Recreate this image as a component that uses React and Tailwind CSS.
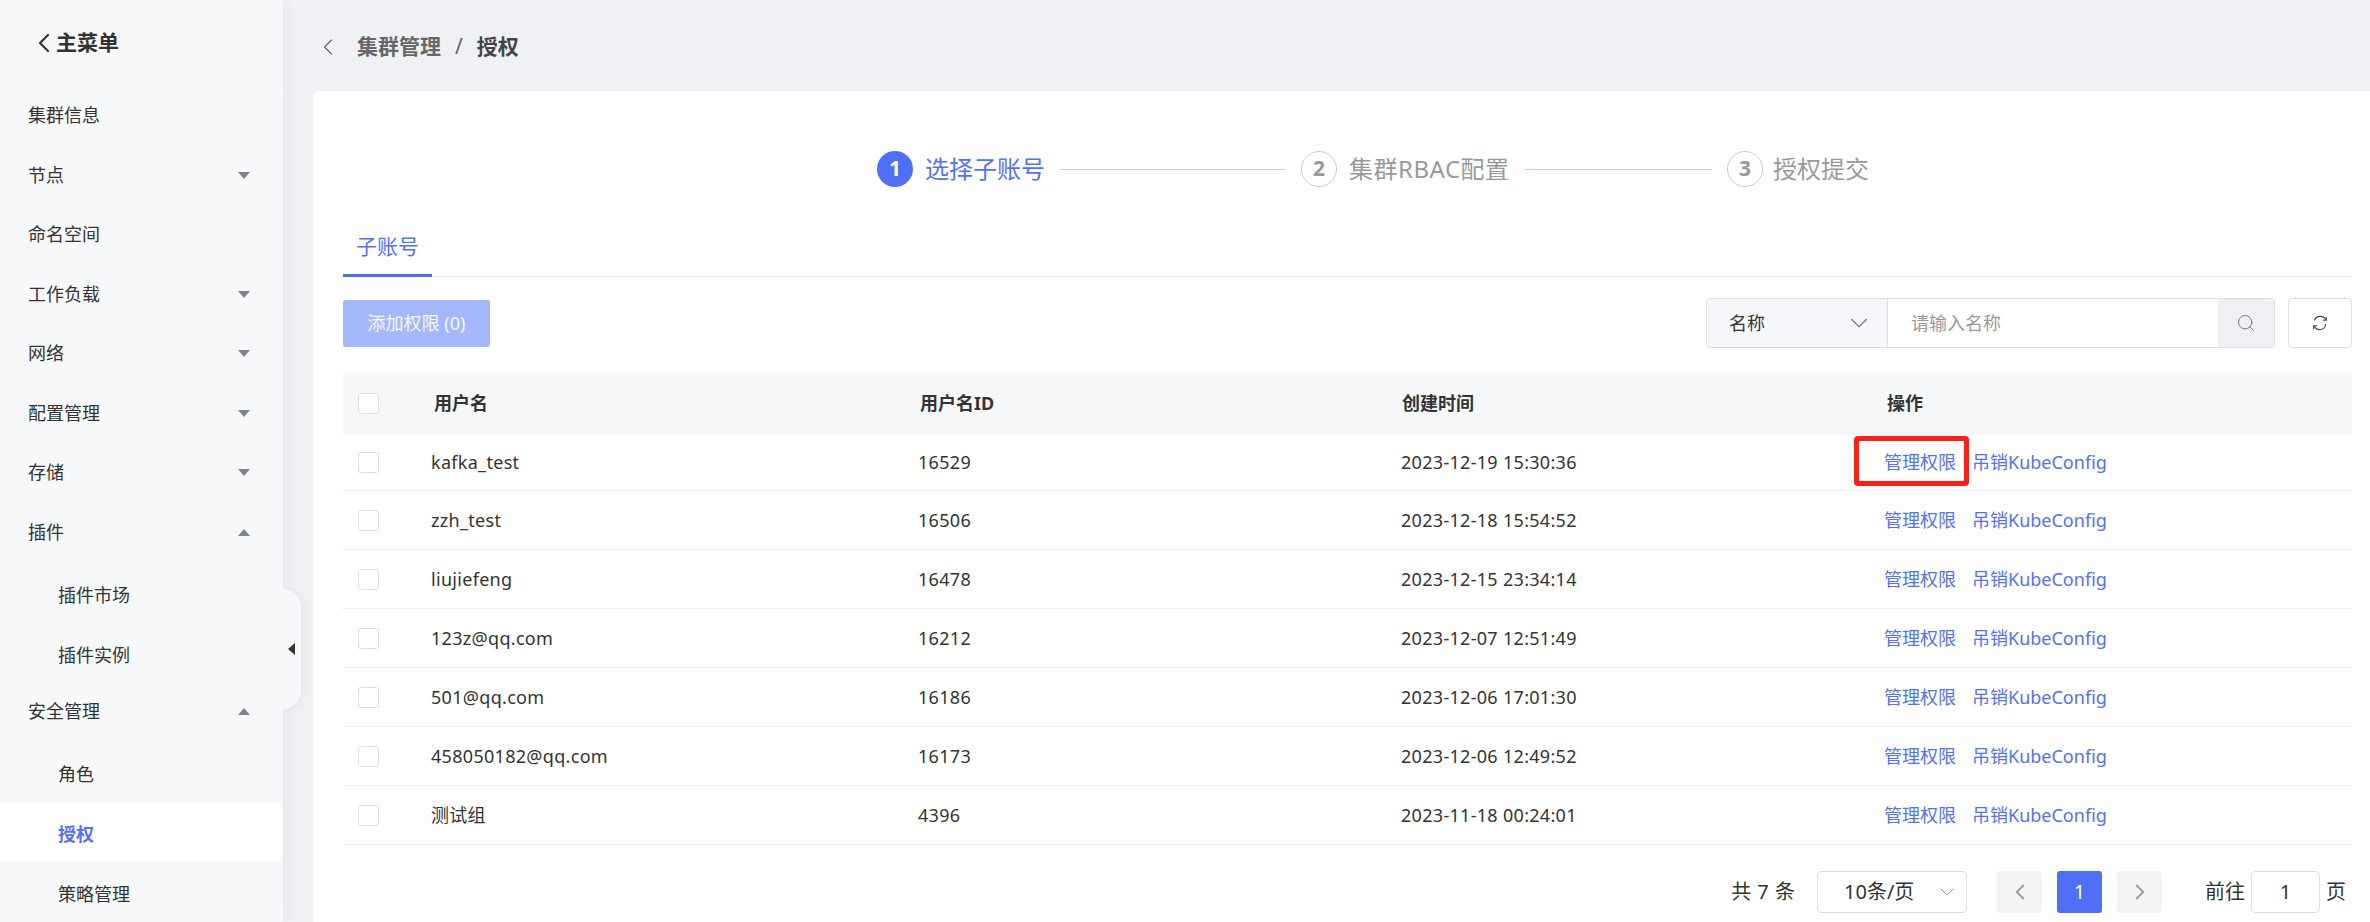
import { ChevronDown, ChevronLeft, ChevronRight, Search } from 'lucide-react'

const menu = [
  { label: '集群信息' },
  { label: '节点', arrow: 'down' },
  { label: '命名空间' },
  { label: '工作负载', arrow: 'down' },
  { label: '网络', arrow: 'down' },
  { label: '配置管理', arrow: 'down' },
  { label: '存储', arrow: 'down' },
  { label: '插件', arrow: 'up' },
  { label: '插件市场', sub: true },
  { label: '插件实例', sub: true },
  { label: '安全管理', arrow: 'up' },
  { label: '角色', sub: true },
  { label: '授权', sub: true, active: true },
  { label: '策略管理', sub: true },
]

const users = [
  { name: 'kafka_test', id: '16529', time: '2023-12-19 15:30:36' },
  { name: 'zzh_test', id: '16506', time: '2023-12-18 15:54:52' },
  { name: 'liujiefeng', id: '16478', time: '2023-12-15 23:34:14' },
  { name: '123z@qq.com', id: '16212', time: '2023-12-07 12:51:49' },
  { name: '501@qq.com', id: '16186', time: '2023-12-06 17:01:30' },
  { name: '458050182@qq.com', id: '16173', time: '2023-12-06 12:49:52' },
  { name: '测试组', id: '4396', time: '2023-11-18 00:24:01' },
]

function Sidebar() {
  return (
    <div className="relative w-[283px] shrink-0 bg-[#f7f8fa] shadow-[4px_0_12px_rgba(40,50,80,0.04)] z-10">
      <div className="flex items-center h-[86px] pl-[28px] text-[21px] font-bold text-[#333]">
        <ChevronLeft size={32} strokeWidth={1.6} className="mr-[-4px]" />
        主菜单
      </div>
      {menu.map(item => (
        <div
          key={item.label}
          className={`flex items-center justify-between pr-[33px] text-[18px] ${item.sub ? 'h-[60px] pl-[58px] pt-[6px]' : 'h-[59.5px] pl-[28px]'} ${item.active ? 'bg-white text-[#5470f6] font-bold' : 'text-[#333]'}`}
        >
          {item.label}
          {item.arrow === 'down' && <div className="w-0 h-0 border-x-[6px] border-x-transparent border-t-[7px] border-t-[#7d8292]" />}
          {item.arrow === 'up' && <div className="w-0 h-0 border-x-[6px] border-x-transparent border-b-[7px] border-b-[#7d8292]" />}
        </div>
      ))}
      <div className="absolute left-full top-[589px] flex items-center w-[18px] h-[120px] pl-[5px] bg-[#f7f8fa] rounded-r-[18px] shadow-[3px_0_6px_rgba(40,50,80,0.04)]">
        <div className="w-0 h-0 border-y-[6px] border-y-transparent border-r-[7px] border-r-[#333]" />
      </div>
    </div>
  )
}

function Step({ num, label, active, width }) {
  return (
    <div className="flex items-center gap-[12px] shrink-0">
      <div className={`flex items-center justify-center w-[36px] h-[36px] rounded-full text-[21px] font-bold ${active ? 'bg-[#4f70f6] text-white' : 'border border-[#c3cbdc] text-[#999]'}`}>
        {num}
      </div>
      <span className={`text-[24px] leading-[36px] whitespace-nowrap ${width} ${active ? 'text-[#5470f6]' : 'text-[#999]'}`}>{label}</span>
    </div>
  )
}

function Checkbox() {
  return <div className="w-[21px] h-[21px] ml-[15px] bg-white border border-[#dcdee2] rounded-[3px]" />
}

function Row({ user }) {
  return (
    <div className="flex items-center h-[59px] first:h-[57px] border-b border-[#eff0f3] text-[18px] text-[#333]">
      <div className="w-[88px]"><Checkbox /></div>
      <div className="w-[487px] tracking-[0.3px]">{user.name}</div>
      <div className="w-[483px] tracking-[0.3px]">{user.id}</div>
      <div className="w-[483px] tracking-[0.3px]">{user.time}</div>
      <div className="flex gap-[16px] text-[#5470f6]">
        <span>管理权限</span>
        <span>吊销KubeConfig</span>
      </div>
    </div>
  )
}

function UserTable() {
  return (
    <div className="relative mt-[25px]">
      <div className="flex items-center h-[61px] bg-[#f6f7f9] border-b border-[#eff0f3] text-[18px] font-bold text-[#333]">
        <div className="w-[91px]"><Checkbox /></div>
        <div className="w-[486px]">用户名</div>
        <div className="w-[482px]">用户名ID</div>
        <div className="w-[485px]">创建时间</div>
        <div>操作</div>
      </div>
      <div>
        {users.map(user => <Row key={user.id} user={user} />)}
      </div>
      <div className="absolute left-[1511px] top-[63px] w-[115px] h-[50px] border-[5px] border-[#ff2015] rounded-[4px]" />
    </div>
  )
}

function Toolbar() {
  return (
    <div className="flex items-center justify-between mt-[21px]">
      <button className="w-[147px] h-[47px] bg-[#a4b7fb] rounded-[3px] text-[18px] text-white/90">添加权限 (0)</button>
      <div className="flex gap-[13px]">
        <div className="flex w-[569px] h-[50px] border border-[#dcdee2] rounded-[4px] overflow-hidden text-[18px]">
          <div className="flex items-center justify-between w-[181px] pl-[22px] pr-[13px] bg-[#f6f7fa] border-r border-[#dcdee2] text-[#333]">
            名称
            <ChevronDown size={30} strokeWidth={0.9} className="text-[#777]" />
          </div>
          <div className="flex-1 flex items-center pl-[23px] text-[#999]">请输入名称</div>
          <div className="flex items-center justify-center w-[56px] bg-[#eef0f4]">
            <Search size={20} strokeWidth={1.2} className="text-[#777]" />
          </div>
        </div>
        <div className="flex items-center justify-center w-[64px] h-[50px] border border-[#dcdee2] rounded-[4px]">
          <svg width="18" height="18" viewBox="0 0 16 16" fill="none" stroke="#444" strokeWidth="1">
            <path d="M3 5.5A5.6 5.6 0 0 1 13.2 5.4" />
            <path d="M13 8.8A5.2 5.2 0 0 1 3 10.6" />
            <path d="M13.6 2.6v3h-3" />
            <path d="M2.4 13.4v-3h3" />
          </svg>
        </div>
      </div>
    </div>
  )
}

function Pagination() {
  return (
    <div className="flex items-center justify-end mt-[26px] pr-[6px] text-[20px] text-[#333]">
      <span className="[word-spacing:1px]">共 7 条</span>
      <div className="flex items-center justify-between w-[150px] h-[42px] ml-[22px] pl-[26px] pr-[7px] border border-[#dcdee2] rounded-[4px]">
        10条/页
        <ChevronDown size={24} strokeWidth={0.9} className="text-[#888]" />
      </div>
      <div className="flex items-center justify-center w-[45px] h-[42px] ml-[30px] bg-[#f2f3f5] rounded-[3px]">
        <ChevronLeft size={26} strokeWidth={1.7} className="text-[#999]" />
      </div>
      <div className="flex items-center justify-center w-[45px] h-[42px] ml-[15px] bg-[#4f70f6] rounded-[3px] text-white">1</div>
      <div className="flex items-center justify-center w-[45px] h-[42px] ml-[15px] bg-[#f2f3f5] rounded-[3px]">
        <ChevronRight size={26} strokeWidth={1.7} className="text-[#999]" />
      </div>
      <span className="ml-[43px]">前往</span>
      <div className="flex items-center justify-center w-[69px] h-[42px] mx-[6px] border border-[#dcdee2] rounded-[4px]">1</div>
      <span>页</span>
    </div>
  )
}

export default function App() {
  return (
    <div className="flex h-[922px] overflow-hidden bg-[#eef0f4] font-['Noto_Sans','Noto_Sans_CJK_SC',sans-serif]">
      <Sidebar />
      <div className="flex-1 flex flex-col min-w-0">
        <div className="flex items-center h-[91px] shrink-0 pl-[31px] pt-[2px] text-[21px] font-bold text-[#666] bg-[#f0f1f5]">
          <ChevronLeft size={28} strokeWidth={1} className="mr-[15px] text-[#666]" />
          <span>集群管理</span>
          <span className="mx-[14px] font-normal">/</span>
          <span className="text-[#444]">授权</span>
        </div>
        <div className="flex-1 ml-[30px] pl-[30px] pr-[18px] bg-white rounded-tl-[6px]">
          <div className="flex items-center h-[36px] mt-[60px] pl-[534px]">
            <Step num="1" label="选择子账号" active width="w-[120px]" />
            <div className="w-[226px] h-px mx-[15px] bg-[#c3cfdf]" />
            <Step num="2" label="集群RBAC配置" width="w-[161px] tracking-[0.5px]" />
            <div className="w-[187px] h-px mx-[15px] bg-[#c3cfdf]" />
            <Step num="3" label="授权提交" width="w-[97px] ml-[-2px]" />
          </div>
          <div className="flex items-end h-[62px] mt-[28px] border-b border-[#e4e6ef]">
            <div className="w-[89px] h-[46px] mb-[-1px] text-center text-[21px] leading-[30px] text-[#5470f6] border-b-[3px] border-[#4f70f6]">子账号</div>
          </div>
          <Toolbar />
          <UserTable />
          <Pagination />
        </div>
      </div>
    </div>
  )
}
